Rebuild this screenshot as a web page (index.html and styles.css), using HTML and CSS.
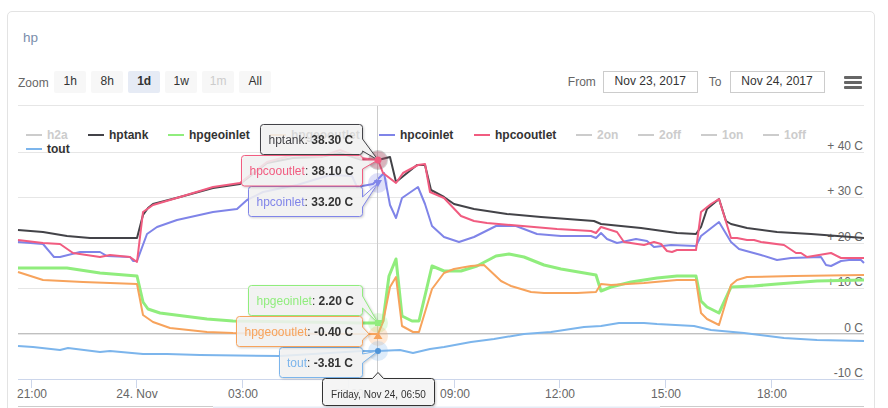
FILE: index.html
```html
<!DOCTYPE html>
<html lang="en">
<head>
<meta charset="utf-8">
<title>hp</title>
<link rel="stylesheet" href="styles.css">
</head>
<body>
<main class="card">
  <h2 class="title">hp</h2>
  <div class="toolbar">
    <div class="zoom">
      <span class="label">Zoom</span>
      <button class="btn">1h</button>
      <button class="btn">8h</button>
      <button class="btn active">1d</button>
      <button class="btn">1w</button>
      <button class="btn disabled">1m</button>
      <button class="btn">All</button>
    </div>
    <div class="range">
      <span class="label">From</span>
      <span class="date">Nov 23, 2017</span>
      <span class="label to">To</span>
      <span class="date">Nov 24, 2017</span>
      <span class="burger"><i></i><i></i><i></i></span>
    </div>
  </div>
  <svg class="chart" width="846" height="303" viewBox="18 105 846 303">
    <path class="grid" d="M18 105.5H864M18 152.5H864M18 197.5H864M18 243.5H864M18 288.5H864M18 334.5H864"/>
    <path class="zero" d="M18 333.5H864"/>
    <path class="axis" d="M18 379.5H864M31.5 379V388M136.5 379V388M242.5 379V388M348.5 379V388M454.5 379V388M559.5 379V388M665.5 379V388M771.5 379V388"/>
    <g class="ylabel">
      <text x="863" y="150">+ 40 C</text>
      <text x="863" y="195">+ 30 C</text>
      <text x="863" y="241">+ 20 C</text>
      <text x="863" y="286">+ 10 C</text>
      <text x="863" y="332">0 C</text>
      <text x="863" y="377">-10 C</text>
    </g>
    <g class="xlabel">
      <text x="32" y="398">21:00</text>
      <text x="137" y="398">24. Nov</text>
      <text x="243" y="398">03:00</text>
      <text x="349" y="398">06:00</text>
      <text x="455" y="398">09:00</text>
      <text x="560" y="398">12:00</text>
      <text x="666" y="398">15:00</text>
      <text x="772" y="398">18:00</text>
    </g>
    <rect class="nav-fill" x="213" y="406.5" width="447" height="2"/>
    <path class="nav-line" d="M18 406.5H213M660 406.5H864"/>

    <polyline class="s s-tank" points="18,230 43,232 67,236 90,238 105,238 137,238 143,215 148,208 153,204 180,197 213,188 240,184 267,163 293,158 320,157 340,153 362,160 378,160 390,157 396,182 417,165 425,165 431,190 444,197 454,204 474,209 507,214 541,217 594,221 601,224 641,228 677,233 696,234 701,227 707,209 719,199 726,221 731,224 747,228 777,232 811,234 864,238"/>
    <polyline class="s s-in" points="18,242 43,244 54,257 60,257 80,252 100,252 107,256 130,257 133,261 137,261 147,234 157,227 177,220 213,212 237,209 247,200 263,192 297,185 330,175 352,176 357,187 373,184 384,173 390,205 396,218 402,198 418,187 425,204 432,226 444,237 459,242 474,237 496,226 516,226 537,234 561,236 591,236 596,238 601,233 607,239 617,243 636,239 647,241 654,247 671,245 696,246 701,236 719,222 731,242 739,249 761,255 777,260 791,258 821,257 826,265 831,266 841,261 849,260 861,260 864,263"/>
    <polyline class="s s-out" points="18,240 43,243 60,244 73,253 100,257 110,255 130,257 137,262 143,212 153,205 180,197 213,187 240,183 267,162 293,155 320,157 340,150 360,158 378,160 383,173 396,183 403,173 418,165 425,164 430,192 444,198 461,216 474,221 487,223 511,225 557,229 591,231 596,233 601,227 617,232 624,242 644,245 654,242 661,244 667,251 672,252 677,250 696,250 701,212 711,204 719,199 731,238 737,238 747,240 754,240 761,242 784,245 796,253 801,253 807,257 831,253 841,258 864,258"/>
    <polyline class="s s-geo" points="18,268 67,268 100,273 137,276 143,302 148,309 160,313 207,319 233,321 362,323 378,323 383,321 389,276 396,259 402,316 412,321 419,321 432,266 444,271 461,271 477,266 496,256 509,254 524,257 544,265 561,269 596,275 601,291 611,287 631,282 657,278 677,276 696,276 701,301 707,307 719,313 731,287 754,286 777,284 817,281 864,280"/>
    <polyline class="s s-geout" points="18,272 43,280 83,282 137,284 143,315 153,322 170,328 207,332 233,333 362,334 378,334 383,322 390,287 396,277 402,326 413,332 419,332 432,289 444,273 454,269 471,266 484,265 501,281 511,286 531,292 544,293 577,293 596,292 601,284 611,285 644,283 677,280 696,280 701,313 707,319 719,325 731,285 737,280 747,277 794,276 864,275"/>
    <polyline class="s s-tout" points="18,346 33,347 60,350 68,348 100,352 110,351 143,354 167,354 200,355 280,356 362,351 378,351 400,350 413,353 430,349 444,347 471,342 494,339 524,334 551,332 584,327 601,326 619,323 644,323 657,324 694,326 711,330 744,333 784,338 817,340 864,341"/>

    <g class="legend">
      <path class="lg off" d="M26 135H42"/><text class="ghost" x="47" y="139">h2a</text>
      <path class="lg l-tank" d="M88 135H104"/><text x="109" y="139">hptank</text>
      <path class="lg l-geo" d="M168 135H184"/><text x="189" y="139">hpgeoinlet</text>
      <path class="lg l-geout" d="M270 135H286"/><text x="291" y="139">hpgeooutlet</text>
      <path class="lg l-in" d="M379 135H395"/><text x="400" y="139">hpcoinlet</text>
      <path class="lg l-out" d="M474 135H490"/><text x="495" y="139">hpcooutlet</text>
      <path class="lg off" d="M576 135H592"/><text class="ghost" x="597" y="139">2on</text>
      <path class="lg off" d="M638 135H654"/><text class="ghost" x="659" y="139">2off</text>
      <path class="lg off" d="M701 135H717"/><text class="ghost" x="722" y="139">1on</text>
      <path class="lg off" d="M763 135H779"/><text class="ghost" x="784" y="139">1off</text>
      <path class="lg l-tout" d="M26 149H42"/><text x="47" y="153">tout</text>
    </g>

    <path class="cross" d="M377.5 106V379"/>

    <circle class="halo h-tank" cx="378" cy="160" r="10"/>
    <circle class="halo h-out" cx="378" cy="160" r="9"/>
    <circle class="halo h-in" cx="378" cy="183" r="10"/>
    <circle class="halo h-geo" cx="378" cy="323" r="10"/>
    <circle class="halo h-geout" cx="378" cy="336" r="10"/>
    <circle class="halo h-tout" cx="378" cy="351" r="10"/>

    <g class="tip t-tank">
      <path d="M263.5 124.5H359.5Q362.5 124.5 362.5 127.5V139L378 160L362.5 151V151.5Q362.5 154.5 359.5 154.5H263.5Q260.5 154.5 260.5 151.5V127.5Q260.5 124.5 263.5 124.5Z"/>
      <text x="268.5" y="144"><tspan class="n-tank">hptank</tspan>: <tspan class="val">38.30 C</tspan></text>
    </g>
    <g class="tip t-geo">
      <path d="M251.5 285.5H359.5Q362.5 285.5 362.5 288.5V296L378 323L362.5 308V312.5Q362.5 315.5 359.5 315.5H251.5Q248.5 315.5 248.5 312.5V288.5Q248.5 285.5 251.5 285.5Z"/>
      <text x="256.5" y="305"><tspan class="n-geo">hpgeoinlet</tspan>: <tspan class="val">2.20 C</tspan></text>
    </g>
    <g class="tip t-in">
      <path d="M251.5 186.5H359.5Q362.5 186.5 362.5 189.5V197L378 183L362.5 207V213.5Q362.5 216.5 359.5 216.5H251.5Q248.5 216.5 248.5 213.5V189.5Q248.5 186.5 251.5 186.5Z"/>
      <text x="256.5" y="206"><tspan class="n-in">hpcoinlet</tspan>: <tspan class="val">33.20 C</tspan></text>
    </g>
    <g class="tip t-out">
      <path d="M244.5 155.5H359.5Q362.5 155.5 362.5 158.5V160L378 160L362.5 169V183Q362.5 186 359.5 186H244.5Q241.5 186 241.5 183V158.5Q241.5 155.5 244.5 155.5Z"/>
      <text x="249.5" y="175"><tspan class="n-out">hpcooutlet</tspan>: <tspan class="val">38.10 C</tspan></text>
    </g>
    <g class="tip t-tout">
      <path d="M282.5 347.5H359.5Q362.5 347.5 362.5 350.5V354L378 351L362.5 363V374.5Q362.5 377.5 359.5 377.5H282.5Q279.5 377.5 279.5 374.5V350.5Q279.5 347.5 282.5 347.5Z"/>
      <text x="287" y="367"><tspan class="n-tout">tout</tspan>: <tspan class="val">-3.81 C</tspan></text>
    </g>
    <g class="tip t-geout">
      <path d="M239.5 316.5H359.5Q362.5 316.5 362.5 319.5V327L369 334L362.5 340V343.5Q362.5 346.5 359.5 346.5H239.5Q236.5 346.5 236.5 343.5V319.5Q236.5 316.5 239.5 316.5Z"/>
      <text x="244.5" y="336"><tspan class="n-geout">hpgeooutlet</tspan>: <tspan class="val">-0.40 C</tspan></text>
    </g>

    <circle class="mk m-out" cx="378" cy="160" r="3.5"/>
    <path class="mk m-in" d="M374 180H382L378 187Z"/>
    <rect class="mk m-geo" x="375" y="320" width="6" height="6"/>
    <path class="mk m-geout" d="M378 332L382.5 339H373.5Z"/>
    <circle class="mk m-tout" cx="378" cy="351" r="3"/>

    <g class="tip t-date">
      <path d="M325.5 378.5H372.5L378 372.5L383.5 378.5H431.5Q434.5 378.5 434.5 381.5V402.5Q434.5 405.5 431.5 405.5H325.5Q322.5 405.5 322.5 402.5V381.5Q322.5 378.5 325.5 378.5Z"/>
      <text class="date-text" x="378.5" y="398">Friday, Nov 24, 06:50</text>
    </g>
  </svg>
</main>
</body>
</html>
```

FILE: styles.css
```css
* { box-sizing: border-box; }
html, body { margin: 0; height: 408px; overflow: hidden; background: #fff; }
body { font-family: "Liberation Sans", Arial, sans-serif; color: #333; }

.card {
  margin: 11px 13px 0 7px;
  height: 420px;
  border: 1.5px solid #e3e3e3;
  border-radius: 5px;
  padding: 0 10px;
  display: flex;
  flex-direction: column;
  background: #fff;
}
.title {
  margin: 17px 0 0 5px;
  font-size: 13.5px;
  line-height: 18px;
  font-weight: 400;
  color: #7a8dab;
}
.toolbar {
  margin-top: 24px;
  display: flex;
  justify-content: space-between;
  height: 22px;
  margin-right: -0.5px;
}
.zoom, .range { display: flex; align-items: center; }
.label { font-size: 12px; color: #666; }
.zoom .label { margin-right: 5.5px; padding-top: 2px; }
.btn {
  width: 32px;
  height: 22px;
  margin-right: 5px;
  padding: 0 0 2px;
  border: 0;
  border-radius: 2px;
  background: #f7f7f7;
  color: #333;
  font: 12px "Liberation Sans", Arial, sans-serif;
}
.btn.active { background: #e6ebf5; font-weight: 700; }
.btn.disabled { color: #ccc; }
.date {
  width: 95px;
  height: 22px;
  margin-left: 7px;
  border: 1px solid #ccc;
  font-size: 12px;
  line-height: 19px;
  text-align: center;
  color: #333;
}
.to { margin-left: 11px; }
.date + .to + .date { margin-left: 8px; }
.burger {
  width: 18px;
  margin-left: 19px;
  margin-right: 3px;
  display: flex;
  flex-direction: column;
  gap: 2px;
  padding-top: 1px;
}
.burger i { display: block; height: 3px; background: #666; border-radius: 1px; }

.chart { display: block; margin-top: 11.5px; flex: none; overflow: visible; }
.chart text { font-family: "Liberation Sans", Arial, sans-serif; font-size: 12px; }

.grid { fill: none; stroke: #e6e6e6; stroke-width: 1; }
.zero { fill: none; stroke: #c0c0c0; stroke-width: 1; }
.axis { fill: none; stroke: #ccd6eb; stroke-width: 1; }
.ylabel text { fill: #666; text-anchor: end; }
.xlabel text { fill: #666; text-anchor: middle; }
.nav-fill { fill: #e6ebf5; }
.nav-line { fill: none; stroke: #ccc; stroke-width: 1; }

.s { fill: none; stroke-width: 2; stroke-linejoin: round; }
.s-tank { stroke: #434348; }
.s-in { stroke: #7f84e8; }
.s-out { stroke: #f15c80; }
.s-geo { stroke: #90ed7d; stroke-width: 3; }
.s-geout { stroke: #f7a35c; }
.s-tout { stroke: #7cb5ec; }

.legend text { font-weight: 700; fill: #333; }
.legend text.ghost { fill: #ccc; }
.lg { fill: none; stroke-width: 2; }
.off { stroke: #ccc; }
.l-tank { stroke: #434348; }
.l-geo { stroke: #90ed7d; }
.l-geout { stroke: #f7a35c; }
.l-in { stroke: #7f84e8; }
.l-out { stroke: #f15c80; }
.l-tout { stroke: #7cb5ec; }

.cross { fill: none; stroke: #ccc; stroke-width: 1; }

.halo { fill-opacity: 0.25; }
.h-tank { fill: #434348; }
.h-out { fill: #f15c80; }
.h-in { fill: #8085e9; }
.h-geo { fill: #90ed7d; }
.h-geout { fill: #f7a35c; }
.h-tout { fill: #7cb5ec; }

.tip { filter: drop-shadow(1px 1px 1px rgba(0, 0, 0, 0.2)); }
.tip path { fill: rgba(247, 247, 247, 0.85); stroke-width: 1; }
.tip text { fill: #333; }
.val { font-weight: 700; fill: #333; }
.t-tank path { stroke: #434348; }
.t-in path { stroke: #8085e9; }
.t-out path { stroke: #f15c80; }
.t-geo path { stroke: #90ed7d; }
.t-geout path { stroke: #f7a35c; }
.t-tout path { stroke: #7cb5ec; }
.t-date path { stroke: #333; fill: rgba(247, 247, 247, 0.92); }
.n-tank { fill: #434348; }
.n-in { fill: #8085e9; }
.n-out { fill: #f15c80; }
.n-geo { fill: #90ed7d; }
.n-geout { fill: #f7a35c; }
.n-tout { fill: #7cb5ec; }
.chart .date-text { font-size: 10px; text-anchor: middle; }

.m-out { fill: #f15c80; }
.m-in { fill: #8085e9; }
.m-geo { fill: #90ed7d; }
.m-geout { fill: #f7a35c; }
.m-tout { fill: #4f94d8; }
```
